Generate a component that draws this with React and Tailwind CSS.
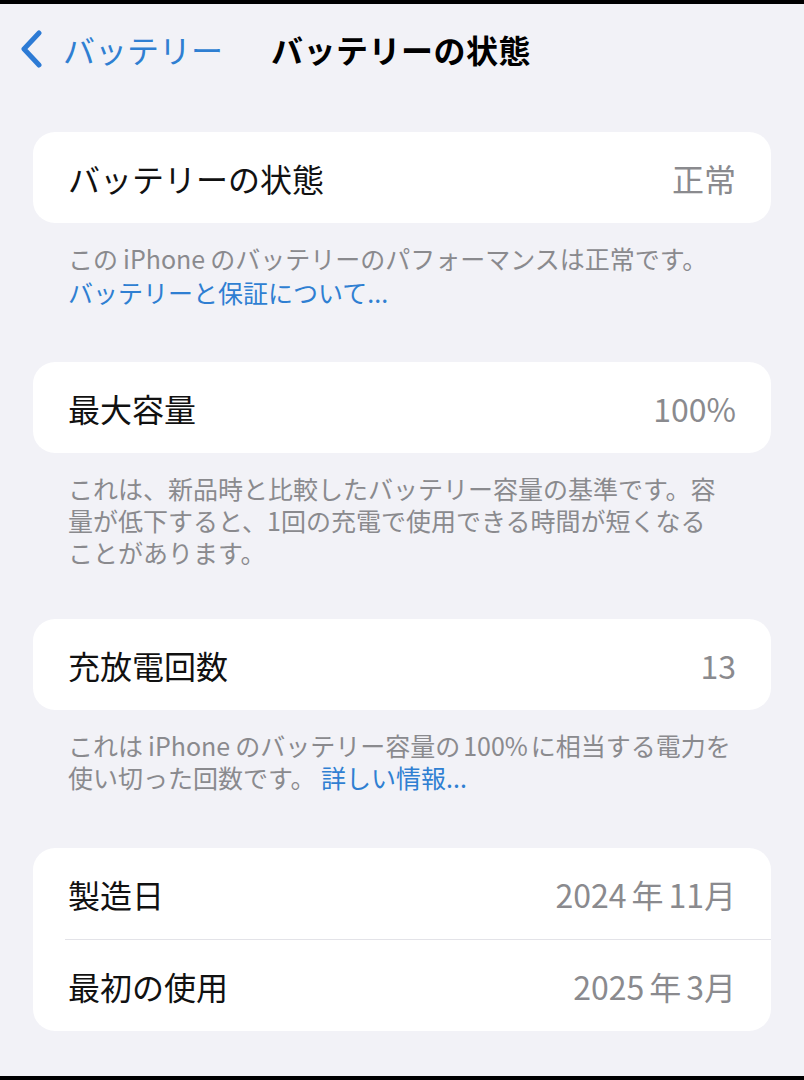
import React from 'react';

const jp = { fontFamily: '"Noto Sans CJK JP", "Noto Sans", sans-serif' };

function Row({ label, children }) {
  return (
    <div className="flex items-center justify-between h-[91px] pl-[35px] pr-[35px]">
      <span className="text-[32px] text-[#111111] leading-none">{label}</span>
      <span className="text-[32px] text-[#8a8a8e] leading-none">{children}</span>
    </div>
  );
}

function Card({ children }) {
  return <div className="mx-[33px] bg-white rounded-[22px] overflow-hidden">{children}</div>;
}

function Note({ children, className = '' }) {
  return (
    <p className={`px-[68px] text-[25px] leading-[32px] text-[#8a8a8e] whitespace-nowrap ${className}`}>
      {children}
    </p>
  );
}

// 欧文と和文の間の小さなアキ
const Latin = ({ children }) => <span className="mx-[5px]">{children}</span>;

export default function App() {
  return (
    <div className="w-[804px] h-[1080px] bg-black flex flex-col" style={jp}>
      <div className="mt-[4px] h-[1072px] bg-[#f2f2f7] flex flex-col">
        {/* ナビゲーションバー */}
        <div className="h-[88px] flex items-center pt-[2px]">
          <svg className="ml-[19px] mr-[20px]" width="24" height="38" viewBox="0 0 24 38" fill="none">
            <path d="M20 3 L5 19 L20 35" stroke="#2d7bd5" strokeWidth="5" strokeLinecap="round" strokeLinejoin="round" />
          </svg>
          <span className="text-[32px] text-[#2f7fd2] leading-none">バッテリー</span>
          <span className="ml-[48px] text-[32px] font-bold text-black leading-none tracking-[0.5px]">バッテリーの状態</span>
        </div>

        <div className="mt-[40px]">
          <Card>
            <Row label="バッテリーの状態">正常</Row>
          </Card>
          <Note className="mt-[18px] leading-[34px]">
            この<Latin>iPhone</Latin>のバッテリーのパフォーマンスは正常です。
            <br />
            <span className="text-[#2f7fd2]">バッテリーと保証について...</span>
          </Note>
        </div>

        <div className="mt-[53px]">
          <Card>
            <Row label="最大容量">100%</Row>
          </Card>
          <Note className="mt-[19px]">
            これは、新品時と比較したバッテリー容量の基準です。容
            <br />
            量が低下すると、1回の充電で使用できる時間が短くなる
            <br />
            ことがあります。
          </Note>
        </div>

        <div className="mt-[51px]">
          <Card>
            <Row label="充放電回数">13</Row>
          </Card>
          <Note className="mt-[19px]">
            これは<Latin>iPhone</Latin>のバッテリー容量の<span className="mx-[3px]">100%</span>に相当する電力を
            <br />
            使い切った回数です。 <span className="text-[#2f7fd2]">詳しい情報...</span>
          </Note>
        </div>

        <div className="mt-[55px]">
          <Card>
            <Row label="製造日">
              2024<span className="mx-[5px]">年</span>11月
            </Row>
            <div className="ml-[32px] h-px bg-[#e3e3e8]" />
            <Row label="最初の使用">
              2025<span className="mx-[5px]">年</span>3月
            </Row>
          </Card>
        </div>
      </div>
    </div>
  );
}
